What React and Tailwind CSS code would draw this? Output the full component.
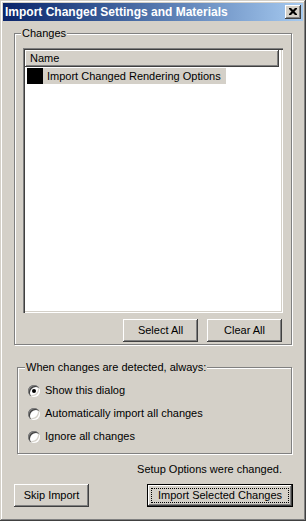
import { useState } from 'react'

const raised = 'shadow-[inset_-1px_-1px_0_#404040,inset_1px_1px_0_#ffffff,inset_-2px_-2px_0_#808080,inset_2px_2px_0_#d4d0c8]'
const etched = 'border border-[#808080] shadow-[inset_1px_1px_0_#ffffff,1px_1px_0_#ffffff]'

function Btn({ children, className = '', isDefault }) {
  if (isDefault) {
    return (
      <div className={`border border-black bg-[#d4d0c8] ${className}`}>
        <div className={`h-full w-full p-[4px] ${raised}`}>
          <div className="flex h-full w-full items-center justify-center outline-1 outline-dotted outline-black">
            {children}
          </div>
        </div>
      </div>
    )
  }
  return (
    <div className={`flex items-center justify-center bg-[#d4d0c8] ${raised} ${className}`}>
      {children}
    </div>
  )
}

function Radio({ checked, label, onClick }) {
  return (
    <div className="flex h-[23px] items-center gap-[5px]" onClick={onClick}>
      <div className="flex h-[12px] w-[12px] items-center justify-center rounded-full bg-white shadow-[inset_1px_1px_0_#808080,inset_2px_2px_0_#404040,inset_-1px_-1px_0_#ffffff,inset_-2px_-2px_0_#d4d0c8]">
        {checked && <div className="h-[4px] w-[4px] rounded-full bg-black" />}
      </div>
      <span>{label}</span>
    </div>
  )
}

export default function App() {
  const [mode, setMode] = useState(0)
  const options = ['Show this dialog', 'Automatically import all changes', 'Ignore all changes']

  return (
    <div className="h-[521px] w-[306px] bg-[#d4d0c8] p-[3px] text-[11px] leading-[13px] text-black shadow-[inset_-1px_-1px_0_#404040,inset_1px_1px_0_#d4d0c8,inset_-2px_-2px_0_#808080,inset_2px_2px_0_#ffffff]" style={{ fontFamily: '"Liberation Sans", Arial, sans-serif' }}>
      {/* title bar */}
      <div className="flex h-[18px] items-center justify-between bg-gradient-to-r from-[#0a246a] to-[#a6caf0] pl-[2px] pr-[2px]">
        <span className="text-[12px] font-bold text-white">Import Changed Settings and Materials</span>
        <div className={`flex h-[14px] w-[16px] items-center justify-center bg-[#d4d0c8] ${raised}`}>
          <svg width="8" height="7" viewBox="0 0 8 7" className="-mt-[1px]">
            <path d="M0 0h2l2 2 2-2h2v1L5.5 3.5 8 6v1H6L4 5 2 7H0V6l2.5-2.5L0 1z" fill="#000" />
          </svg>
        </div>
      </div>

      {/* changes group */}
      <div className={`relative ml-[11px] mt-[12px] h-[312px] w-[278px] px-[8px] pt-[14px] ${etched}`}>
        <span className="absolute -top-[7px] left-[6px] bg-[#d4d0c8] px-[1px]">Changes</span>
        <div className="h-[265px] w-[260px] bg-white p-[2px] shadow-[inset_1px_1px_0_#808080,inset_2px_2px_0_#404040,inset_-1px_-1px_0_#ffffff,inset_-2px_-2px_0_#d4d0c8]">
          <div className={`flex h-[17px] w-[254px] items-center bg-[#d4d0c8] pl-[5px] ${raised}`}>Name</div>
          <div className="flex pl-[2px] pt-[1px]">
            <div className="h-[16px] w-[16px] bg-black" />
            <div className="flex h-[16px] items-center bg-[#d4d0c8] pl-[4px] pr-[5px]">Import Changed Rendering Options</div>
          </div>
        </div>
        <div className="mr-[1px] mt-[6px] flex justify-end gap-[9px]">
          <Btn className="h-[23px] w-[75px]">Select All</Btn>
          <Btn className="h-[23px] w-[75px]">Clear All</Btn>
        </div>
      </div>

      {/* behaviour group */}
      <div className={`relative ml-[14px] mt-[22px] h-[87px] w-[275px] pl-[10px] pt-[11px] ${etched}`}>
        <span className="absolute -top-[7px] left-[7px] bg-[#d4d0c8] px-[1px]">When changes are detected, always:</span>
        {options.map((o, i) => (
          <Radio key={o} label={o} checked={mode === i} onClick={() => setMode(i)} />
        ))}
      </div>

      <div className="mt-[9px] pr-[21px] text-right">Setup Options were changed.</div>

      <div className="mt-[8px] flex justify-between pl-[11px] pr-[10px]">
        <Btn className="h-[23px] w-[75px]">Skip Import</Btn>
        <Btn isDefault className="h-[23px] w-[146px]">Import Selected Changes</Btn>
      </div>
    </div>
  )
}
